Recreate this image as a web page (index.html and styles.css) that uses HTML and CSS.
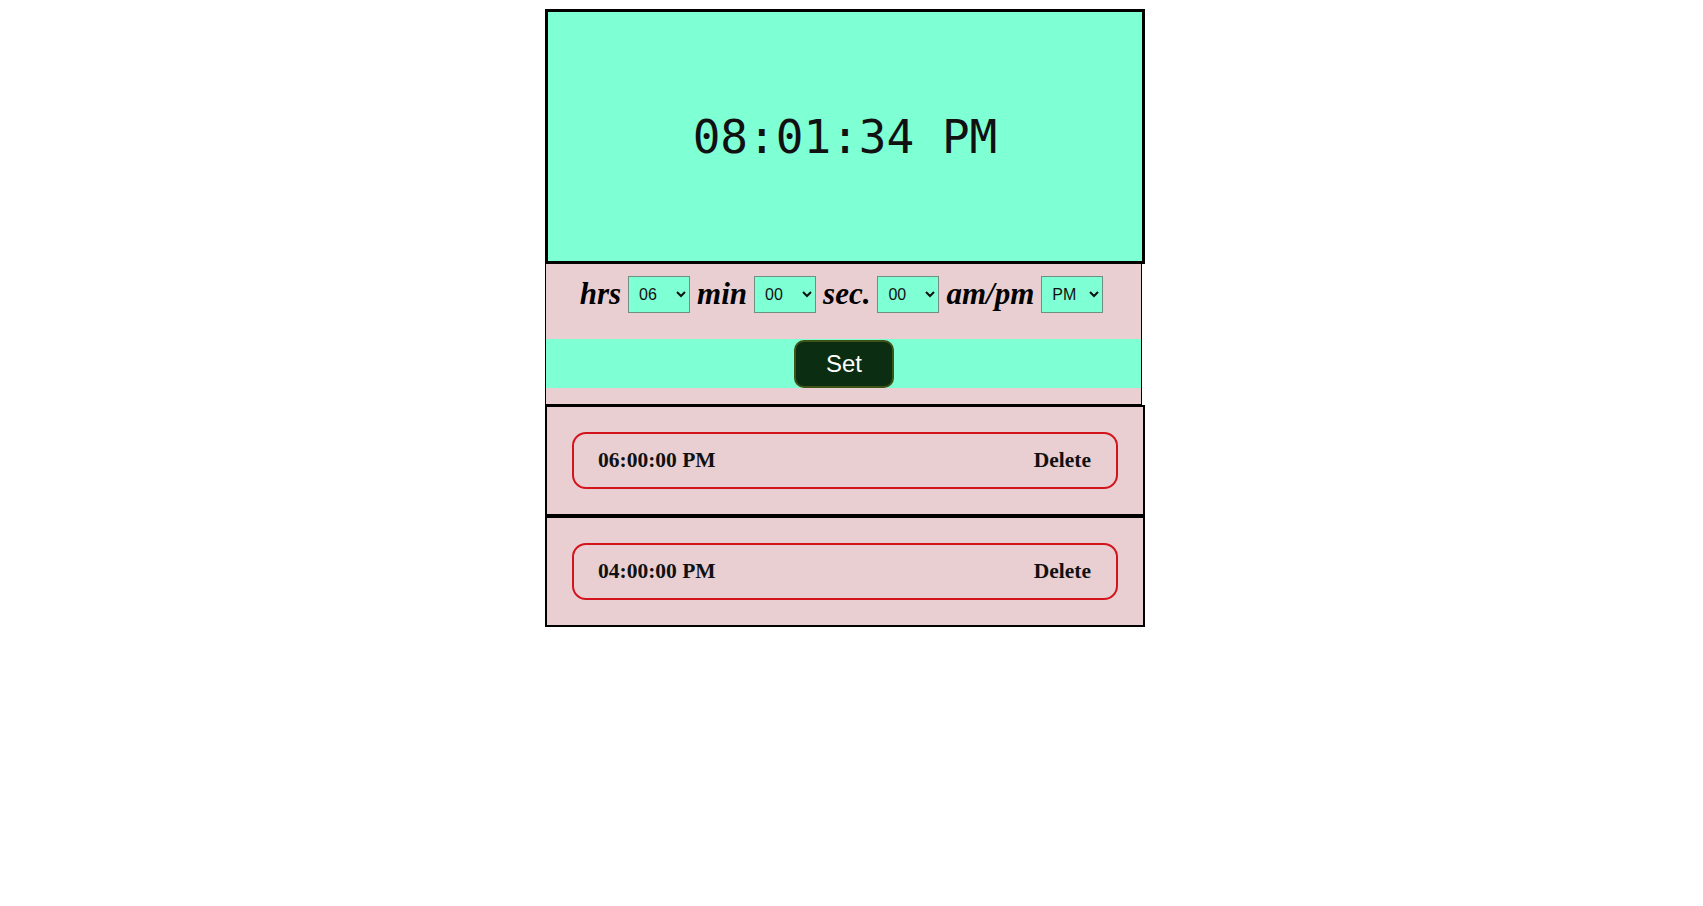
FILE: index.html
```html
<!DOCTYPE html>
<html lang="en">
<head>
<meta charset="utf-8">
<title>Alarm Clock</title>
<link rel="stylesheet" href="styles.css">
</head>
<body>
<div class="app">
  <div class="clock">08:01:34 PM</div>
  <div class="controls">
    <div class="time-row">
      <span class="lbl">hrs</span>
      <select class="sel"><option>06</option></select>
      <span class="lbl">min</span>
      <select class="sel"><option>00</option></select>
      <span class="lbl">sec.</span>
      <select class="sel"><option>00</option></select>
      <span class="lbl">am/pm</span>
      <select class="sel"><option>PM</option></select>
    </div>
    <div class="set-band"><button class="set-btn">Set</button></div>
  </div>
  <div class="alarm">
    <div class="alarm-item"><span>06:00:00 PM</span><span>Delete</span></div>
  </div>
  <div class="alarm">
    <div class="alarm-item"><span>04:00:00 PM</span><span>Delete</span></div>
  </div>
</div>
</body>
</html>
```
FILE: styles.css
```css
* { box-sizing: border-box; }
body {
  margin: 0;
  background: #fff;
  font-family: "Liberation Serif", serif;
}
.app {
  width: 600px;
  margin: 9px 0 0 545px;
}
.clock {
  height: 255px;
  border: 3px solid #000;
  background: #7fffd4;
  display: flex;
  align-items: center;
  justify-content: center;
  font-family: "DejaVu Sans Mono", monospace;
  font-size: 46px;
  color: #111;
}
.controls {
  width: 597px;
  border: 1px solid #000;
  border-top: none;
  background: #e9cfd1;
  padding: 12px 0 16px;
}
.time-row {
  display: flex;
  justify-content: center;
  align-items: center;
  gap: 7px;
  height: 37px;
  font-weight: bold;
  font-style: italic;
  font-size: 31px;
  padding-right: 4px;
}
.lbl { line-height: 37px; position: relative; top: -1px; }
.sel {
  width: 62px;
  height: 37px;
  background: #7fffd4;
  border: 1px solid #6f8f82;
  font-family: "Liberation Sans", Arial, sans-serif;
  font-size: 16px;
  font-style: normal;
  font-weight: normal;
  color: #111;
  padding-left: 6px;
}
.set-band {
  margin-top: 26px;
  height: 49px;
  background: #7fffd4;
  display: flex;
  justify-content: center;
  align-items: center;
}
.set-btn {
  width: 100px;
  height: 48px;
  background: #0b2e12;
  color: #fff;
  border: 2px solid #3f5218;
  border-radius: 10px;
  font-family: "Liberation Sans", Arial, sans-serif;
  font-size: 24px;
  margin-left: 1px;
}
.alarm {
  border: 2px solid #000;
  background: #e9cfd1;
  padding: 25px 25px;
}
.alarm-item {
  height: 57px;
  border: 2px solid #d3141c;
  border-radius: 14px;
  display: flex;
  justify-content: space-between;
  align-items: center;
  padding: 0 25px 0 24px;
  font-weight: bold;
  font-size: 21.5px;
  color: #111;
}
```
